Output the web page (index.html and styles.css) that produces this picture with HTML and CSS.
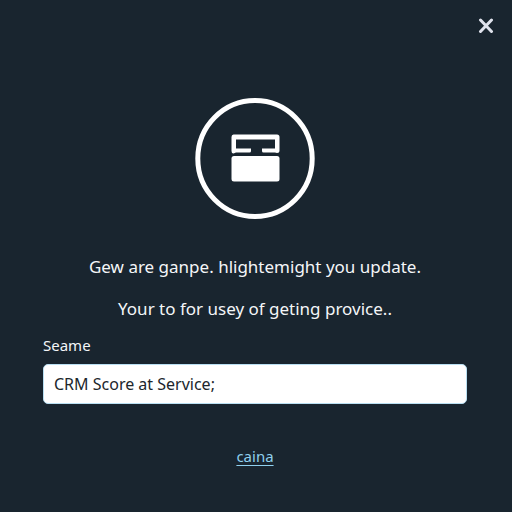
FILE: index.html
```html
<!DOCTYPE html>
<html lang="en">
<head>
<meta charset="utf-8">
<meta name="viewport" content="width=device-width, initial-scale=1">
<title>CRM update</title>
<link rel="stylesheet" href="styles.css">
</head>
<body>
<main class="dialog">
  <button class="close" type="button" aria-label="Close">
    <svg viewBox="0 0 16 16" width="16" height="16" aria-hidden="true"><path d="M2.5 2 13.5 13.500M13.5 2 2.5 13.500"/></svg>
  </button>
  <svg class="emblem" viewBox="0 0 120 122" width="120" height="122" aria-hidden="true">
    <ellipse class="ring" cx="60" cy="60.5" rx="57.2" ry="57.9"/>
    <path class="solid" fill-rule="evenodd" d="M38.5 36.5H82Q84.500 36.500 84.500 39V52.500Q84.500 55 82 55L80 54.500H68.500Q67 54.500 67 53V50.500H80V41.500H41V50.500H56V53Q56 54.500 54.500 54.500H41L38.500 55.500Q36.500 55.500 36.500 53V39Q36.500 36.500 38.500 36.500Z"/>
    <rect class="solid" x="36.500" y="58" width="48" height="25.500" rx="2.500"/>
  </svg>
  <div class="message">
    <p>Gew are ganpe. hlightemight you update.</p>
    <p>Your to for usey of geting provice..</p>
  </div>
  <form class="field">
    <label for="name">Seame</label>
    <input id="name" type="text" value="CRM Score at Service;">
  </form>
  <a class="link" href="#">caina</a>
</main>
</body>
</html>
```
FILE: styles.css
```css
* { box-sizing: border-box; }
body {
  margin: 0;
  background: #19252f;
  color: #f4f6f8;
  font-family: "Noto Sans", sans-serif;
}
.dialog {
  position: relative;
  min-height: 100vh;
  display: flex;
  flex-direction: column;
  align-items: center;
  padding: 98px 45px 32px 43px;
}
.close {
  position: absolute;
  top: 14px;
  right: 14px;
  width: 24px;
  height: 24px;
  padding: 4px;
  border: 0;
  background: none;
  cursor: pointer;
}
.close svg {
  display: block;
  fill: none;
  stroke: #dfe2ec;
  stroke-width: 3;
  stroke-linecap: round;
}
.emblem { display: block; }
.ring {
  fill: none;
  stroke: #fff;
  stroke-width: 5;
}
.solid { fill: #fff; }
.message {
  display: flex;
  flex-direction: column;
  gap: 18px;
  margin-top: 35px;
  text-align: center;
  font-size: 17px;
  line-height: 24px;
}
.message p { margin: 0; }
.field {
  display: flex;
  flex-direction: column;
  gap: 9px;
  width: 100%;
  margin-top: 14px;
}
.field label {
  font-size: 15px;
  line-height: 20px;
}
.field input {
  width: 100%;
  height: 40px;
  padding: 0 10px;
  border: 1px solid #b9dff2;
  border-radius: 5px;
  background: #fff;
  color: #20262c;
  font: 16px "Noto Sans", sans-serif;
}
.link {
  margin-top: 42px;
  color: #8fd0ee;
  font-size: 15px;
  line-height: 20px;
  text-underline-offset: 3px;
}
```
